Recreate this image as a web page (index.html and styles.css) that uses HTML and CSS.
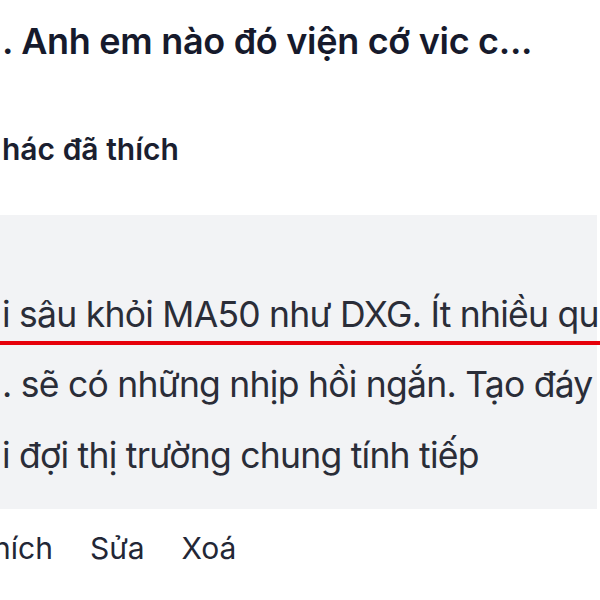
FILE: index.html
```html
<!DOCTYPE html>
<html lang="vi">
<head>
<meta charset="utf-8">
<title>Bình luận</title>
<link rel="stylesheet" href="styles.css">
</head>
<body>
<main class="page">
  <h1 class="title">. Anh em nào đó viện cớ vic c...</h1>
  <div class="likes">hác đã thích</div>
  <section class="bubble">
    <p class="line">i sâu khỏi MA50 như DXG. Ít nhiều qu</p>
    <p class="line">. sẽ có những nhịp hồi ngắn. Tạo đáy</p>
    <p class="line">i đợi thị trường chung tính tiếp</p>
    <div class="mark"></div>
  </section>
  <nav class="actions">
    <span class="act act-like">hích</span>
    <span class="act">Sửa</span>
    <span class="act">Xoá</span>
  </nav>
</main>
</body>
</html>
```

FILE: styles.css
```css
html, body {
  margin: 0;
  padding: 0;
  background: #ffffff;
}
body {
  width: 600px;
  height: 600px;
  overflow: hidden;
  font-family: Inter, "Noto Sans", "Liberation Sans", sans-serif;
}
.page {
  display: flex;
  flex-direction: column;
  padding-top: 18px;
}
.title {
  margin: 0 0 0 2px;
  font-size: 36px;
  line-height: 46px;
  letter-spacing: -0.3px;
  font-weight: 600;
  color: #161a2c;
  white-space: nowrap;
}
.likes {
  margin: 65px 0 0 2px;
  font-size: 30px;
  line-height: 40px;
  font-weight: 600;
  color: #1b1f30;
  white-space: nowrap;
}
.bubble {
  position: relative;
  margin-top: 46px;
  width: 597px;
  box-sizing: border-box;
  padding: 65px 0 18px 2px;
  background: #f2f3f5;
}
.line {
  margin: 0;
  font-size: 35.5px;
  line-height: 70px;
  letter-spacing: -0.75px;
  font-weight: 400;
  color: #2a2d38;
  white-space: nowrap;
}
.line:last-of-type {
  margin-top: 1px;
}
.mark {
  position: absolute;
  left: 0;
  width: 600px;
  top: 126px;
  height: 4px;
  background: #e6000a;
}
.actions {
  display: flex;
  gap: 37px;
  margin-top: 19px;
  font-size: 30px;
  line-height: 40px;
  color: #232736;
}
.act-like {
  margin-left: -7px;
}
```
